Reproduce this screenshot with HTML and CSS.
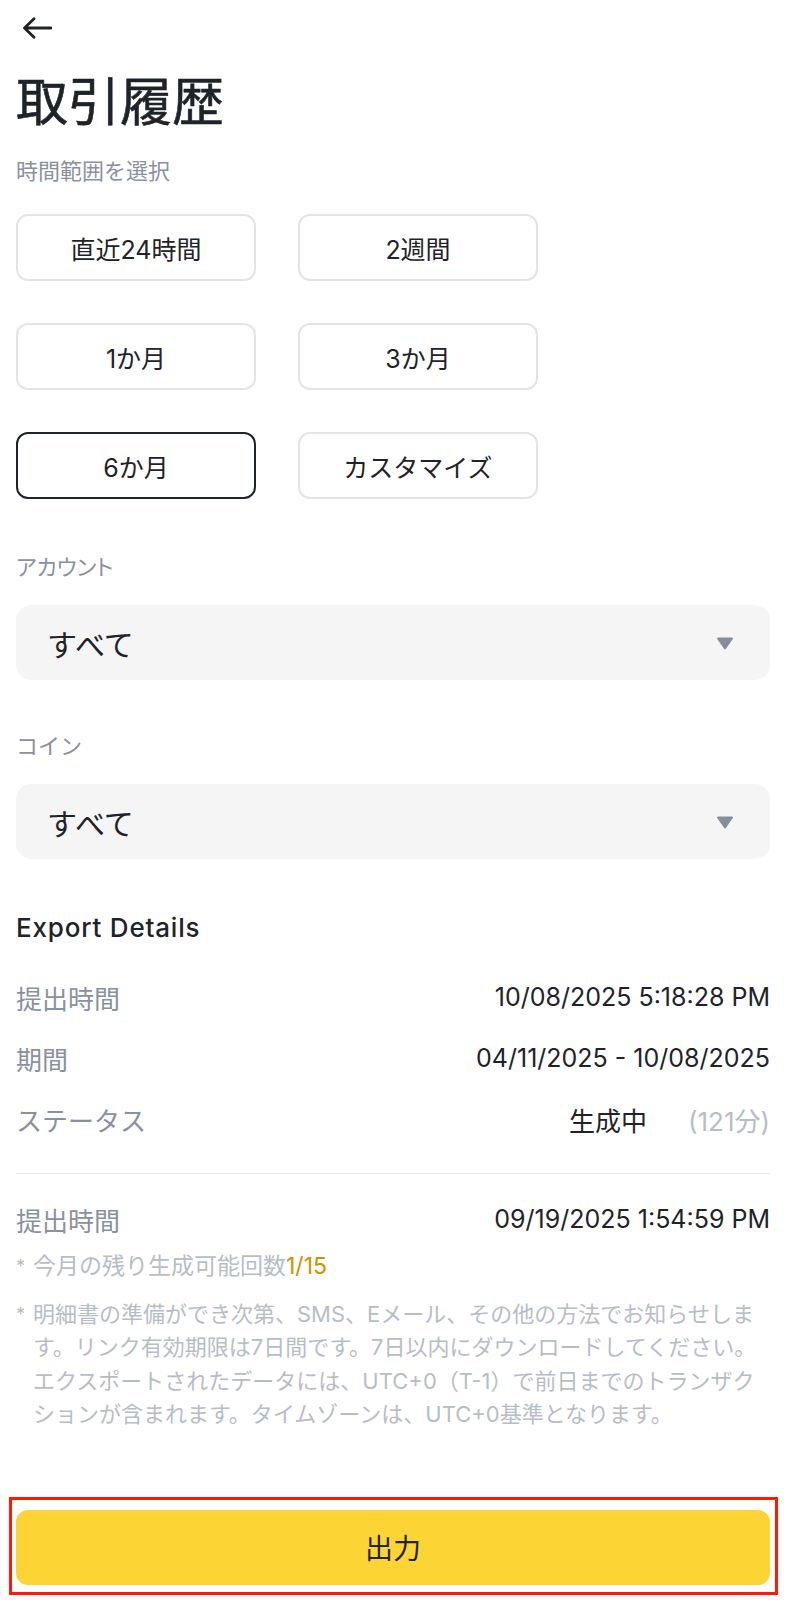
FILE: index.html
```html
<!DOCTYPE html>
<html lang="ja">
<head>
<meta charset="utf-8">
<title>取引履歴</title>
<link rel="stylesheet" href="styles.css">
</head>
<body>
<div class="page">
  <header class="topbar">
    <svg class="back" width="30" height="22" viewBox="0 0 30 22" aria-label="戻る">
      <path d="M29 11H2.5M12 1.8L2.5 11L12 20.2" fill="none" stroke="#1e2329" stroke-width="2.8" stroke-linecap="round" stroke-linejoin="round"/>
    </svg>
  </header>

  <h1 class="title">取引履歴</h1>

  <p class="label range-label">時間範囲を選択</p>
  <div class="range-grid">
    <button class="chip">直近24時間</button>
    <button class="chip">2週間</button>
    <button class="chip">1か月</button>
    <button class="chip">3か月</button>
    <button class="chip chip-active">6か月</button>
    <button class="chip">カスタマイズ</button>
  </div>

  <section class="field">
    <p class="label label-tight">アカウント</p>
    <div class="select">
      <span class="select-text">すべて</span>
      <svg class="caret" width="18" height="13" viewBox="0 0 18 13"><path d="M2 1.5H16L9 11.5Z" fill="#848e9c" stroke="#848e9c" stroke-width="2" stroke-linejoin="round"/></svg>
    </div>
  </section>

  <section class="field field-coin">
    <p class="label">コイン</p>
    <div class="select">
      <span class="select-text">すべて</span>
      <svg class="caret" width="18" height="13" viewBox="0 0 18 13"><path d="M2 1.5H16L9 11.5Z" fill="#848e9c" stroke="#848e9c" stroke-width="2" stroke-linejoin="round"/></svg>
    </div>
  </section>

  <h2 class="section-title">Export Details</h2>
  <div class="details">
    <div class="row"><span class="row-label">提出時間</span><span class="row-value">10/08/2025 5:18:28 PM</span></div>
    <div class="row"><span class="row-label">期間</span><span class="row-value">04/11/2025 - 10/08/2025</span></div>
    <div class="row"><span class="row-label">ステータス</span><span class="row-value"><span class="status">生成中</span><span class="status-time">(121分)</span></span></div>
  </div>
  <div class="divider"></div>
  <div class="row row-second"><span class="row-label">提出時間</span><span class="row-value">09/19/2025 1:54:59 PM</span></div>

  <p class="note note-count"><span class="star">*</span><span>今月の残り生成可能回数<span class="count">1/15</span></span></p>
  <p class="note note-long"><span class="star">*</span><span>明細書の準備ができ次第、SMS、Eメール、その他の方法でお知らせしま<br>す。リンク有効期限は7日間です。7日以内にダウンロードしてください。<br>エクスポートされたデータには、UTC+0（T-1）で前日までのトランザク<br>ションが含まれます。タイムゾーンは、UTC+0基準となります。</span></p>

  <footer class="footer">
    <button class="submit">出力</button>
  </footer>
</div>
</body>
</html>
```

FILE: styles.css
```css
* { box-sizing: border-box; }
html, body { margin: 0; padding: 0; background: #ffffff; }
body {
  font-family: Inter, "Noto Sans CJK JP", sans-serif;
  color: #1e2329;
}
.page {
  width: 787px;
  padding: 0 17px 0 16px;
}
.topbar {
  height: 56px;
  padding-top: 17px;
  padding-left: 6px;
}
.back { display: block; }

.title {
  margin: 12px 0 0;
  font-family: "Noto Sans CJK JP", sans-serif;
  font-size: 52px;
  line-height: 62px;
  font-weight: 400;
  letter-spacing: 0;
  -webkit-text-stroke: 0.6px #1e2329;
}

.label {
  margin: 0;
  font-family: "Noto Sans CJK JP", sans-serif;
  font-size: 22px;
  line-height: 30px;
  color: #8a919e;
}
.label-tight { font-feature-settings: "palt"; }
.range-label { margin-top: 24px; }

.range-grid {
  margin-top: 30px;
  display: grid;
  grid-template-columns: 240px 240px;
  column-gap: 42px;
  row-gap: 42px;
}
.chip {
  height: 67px;
  border: 2px solid #e2e4e8;
  border-radius: 12px;
  background: #ffffff;
  font-family: Inter, "Noto Sans CJK JP", sans-serif;
  font-size: 25px;
  color: #1e2329;
  padding: 0;
}
.chip-active { border-color: #1e2329; }

.field { margin-top: 51px; }
.field-coin { margin-top: 49px; }
.select {
  margin-top: 25px;
  height: 75px;
  background: #f5f5f5;
  border-radius: 15px;
  display: flex;
  align-items: center;
  justify-content: space-between;
  padding: 0 36px 0 31px;
}
.select-text {
  font-family: "Noto Sans CJK JP", sans-serif;
  font-size: 30px;
  color: #1e2329;
}
.caret { display: block; margin-top: 2px; }

.section-title {
  margin: 54px 0 0;
  font-family: Inter, sans-serif;
  font-size: 26px;
  line-height: 30px;
  font-weight: 500;
  letter-spacing: 0.8px;
  color: #1e2329;
}

.details {
  margin-top: 36px;
  display: flex;
  flex-direction: column;
  gap: 25px;
}
.row {
  display: flex;
  justify-content: space-between;
  align-items: center;
  height: 36px;
}
.row-label {
  font-family: "Noto Sans CJK JP", sans-serif;
  font-size: 26px;
  color: #8a919e;
}
.row-value {
  font-family: Inter, "Noto Sans CJK JP", sans-serif;
  font-size: 25px;
  color: #1e2329;
  display: flex;
  align-items: center;
}
.status { font-family: "Noto Sans CJK JP", sans-serif; font-size: 26px; }
.status-time {
  margin-left: 41px;
  font-size: 26px;
  color: #b7bdc6;
}

.divider {
  margin-top: 36px;
  height: 1px;
  background: #e6e8eb;
}
.row-second { margin-top: 27px; }

.note {
  margin: 13px 0 0;
  display: flex;
  font-size: 22px;
  line-height: 33.5px;
  color: #b7bdc6;
  font-family: Inter, "Noto Sans CJK JP", sans-serif;
}
.note-count { font-size: 23px; }
.note-long {
  margin-top: 14px;
  white-space: nowrap;
}
.star {
  width: 17px;
  flex: none;
  font-size: 18px;
}
.count { color: #c99400; }

.footer {
  margin: 65px -8px 0 -7px;
  padding: 10px 5px 7px 4px;
  border: 3px solid #ff1a00;
}
.submit {
  display: block;
  width: 100%;
  height: 75px;
  border: none;
  border-radius: 12px;
  background: #fcd535;
  font-family: "Noto Sans CJK JP", sans-serif;
  font-size: 28px;
  color: #1e2329;
  padding: 0;
}
```
